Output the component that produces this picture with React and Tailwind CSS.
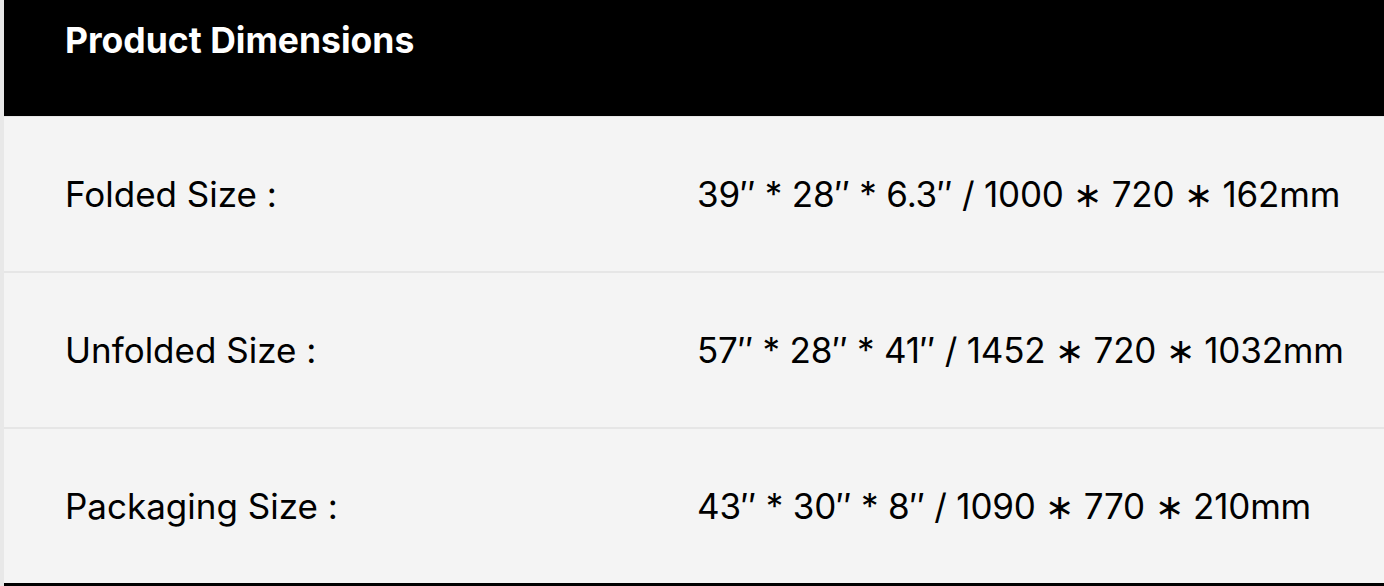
const rows = [
  { label: 'Folded Size :', value: '39″ * 28″ * 6.3″ / 1000 ∗ 720 ∗ 162mm' },
  { label: 'Unfolded Size :', value: '57″ * 28″ * 41″ / 1452 ∗ 720 ∗ 1032mm' },
  { label: 'Packaging Size :', value: '43″ * 30″ * 8″ / 1090 ∗ 770 ∗ 210mm' },
];

const App = () => {
  return (
    <div className="min-h-[586px] w-[1384px] overflow-hidden border-l-4 border-[#e8e8e8] bg-[#f4f4f4] font-['Inter','Liberation_Sans',sans-serif] text-black">
      <div className="h-[117px] bg-black px-[61px] pt-[21px] border-b border-[#e6e6e6]">
        <h2 className="text-[35.5px] font-bold leading-[40px] text-white">Product Dimensions</h2>
      </div>
      <div className="border-b-[3px] border-black">
        {rows.map((row, i) => (
          <div
            key={row.label}
            className={`grid grid-cols-[632px_1fr] items-center px-[61px] text-[35px] leading-[40px] ${
              i < rows.length - 1 ? 'h-[156px] border-b-2 border-[#e6e6e6]' : 'h-[154px]'
            }`}
          >
            <span>{row.label}</span>
            <span className="whitespace-nowrap tracking-[-0.2px]">{row.value}</span>
          </div>
        ))}
      </div>
    </div>
  );
};

export default App;
